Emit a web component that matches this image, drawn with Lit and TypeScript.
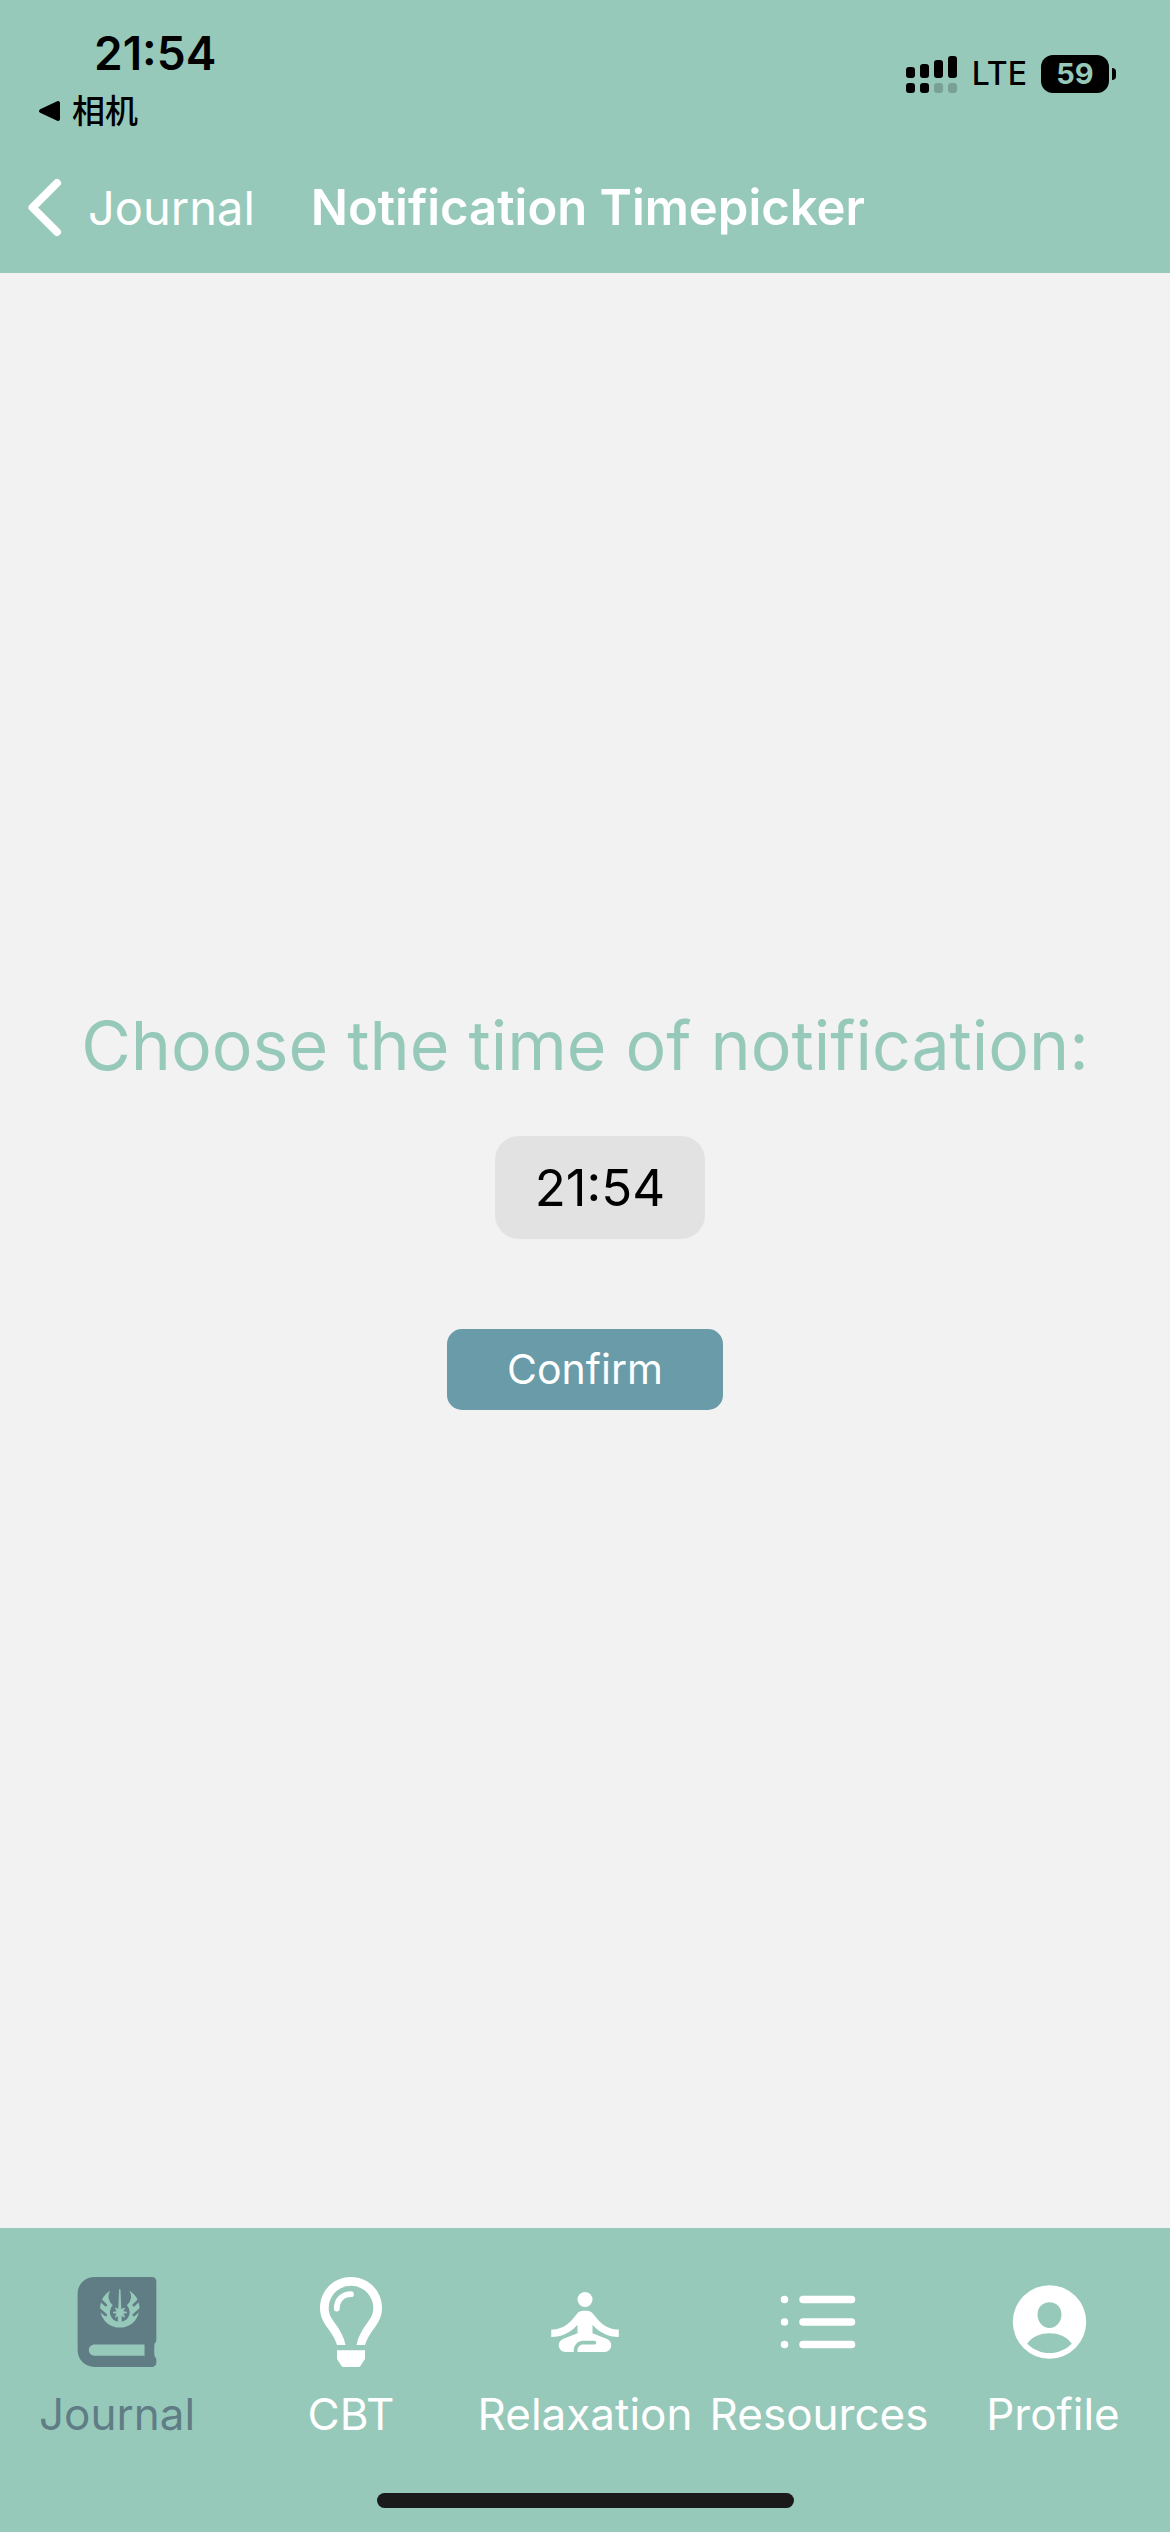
import { LitElement, html, svg, css } from "lit";
import { customElement, property, state } from "lit/decorators.js";

const icons = {
  journal: svg`<path fill-rule="evenodd" transform="translate(5.6) scale(.17578)" d="M438.4 377.6c-3.2 12.8-3.2 57.6 0 73.6Q448 460.8 448 470.4v16c0 16-12.8 25.6-25.6 25.6H96c-54.4 0-96-41.6-96-96V96C0 41.6 41.6 0 96 0H422.4C438.4 0 448 9.6 448 25.6v332.8Q448 372.8 438.4 377.6ZM380.8 384H96c-16 0-32 12.8-32 32s12.8 32 32 32H380.8ZM128.01562,176.01562c0,.51563.14063.98438.14063,1.5l37.10937,32.46876A7.99954,7.99954,0,0,1,160,224h-.01562a9.17678,9.17678,0,0,1-5.25-1.98438L131.14062,201.375C142.6875,250.95312,186.90625,288,240,288s97.3125-37.04688,108.875-86.625l-23.59375,20.64062a8.02516,8.02516,0,0,1-5.26563,1.96876H320a9.14641,9.14641,0,0,1-6.01562-2.71876A9.26508,9.26508,0,0,1,312,216a9.097,9.097,0,0,1,2.73438-6.01562l37.10937-32.46876c.01563-.53124.15625-1,.15625-1.51562,0-11.04688-2.09375-21.51562-5.06251-31.59375l-21.26562,21.25a8.00467,8.00467,0,0,1-11.32812-11.3125l26.42187-26.40625a111.81517,111.81517,0,0,0-46.35937-49.26562,63.02336,63.02336,0,0,1-14.0625,82.64062A55.83846,55.83846,0,0,1,251.625,254.73438l-1.42188-34.28126,12.67188,8.625a3.967,3.967,0,0,0,2.25.6875,3.98059,3.98059,0,0,0,3.43749-6.03124l-8.53124-14.3125,17.90625-3.71876a4.00647,4.00647,0,0,0,0-7.84374l-17.90625-3.71876,8.53124-14.3125a3.98059,3.98059,0,0,0-3.43749-6.03124,4.726,4.726,0,0,0-2.25.67187L248.6875,184.125,244,71.82812a4.00386,4.00386,0,0,0-8,0l-4.625,110.8125-12-8.15624a4.003,4.003,0,0,0-5.68751,5.35937l8.53126,14.3125L204.3125,197.875a3.99686,3.99686,0,0,0,0,7.82812l17.90625,3.73438-8.53126,14.29688a4.72469,4.72469,0,0,0-.56249,2.04687,4.59547,4.59547,0,0,0,1.25,2.90625,4.01059,4.01059,0,0,0,2.75,1.09375,4.09016,4.09016,0,0,0,2.25-.6875l10.35937-7.04687L228.375,254.76562a55.86414,55.86414,0,0,1-28.71875-93.45312,63.01119,63.01119,0,0,1-14.04688-82.65625,111.93158,111.93158,0,0,0-46.375,49.26563l26.42187,26.42187a7.99917,7.99917,0,0,1-11.3125,11.3125l-21.26563-21.26563C130.09375,154.48438,128,164.95312,128.01562,176.01562Z"/>`,
  bulb: svg`
    <path fill-rule="evenodd" d="M45 0C27.500 0 14 13.800 14 31c0 9 4 15 8 20.500C26.500 57.500 29 62 31 68h8.500C38 60 34.500 54 29.500 47 25.500 41.500 22.700 37.500 22.700 31 22.700 18.600 32.600 8.800 45 8.800S67.300 18.600 67.300 31c0 6.500-2.800 10.500-6.800 16C55.500 54 52 60 50.500 68H59c2-6 4.500-10.500 9-16.500 4-5.500 8-11.500 8-20.500C76 13.800 62.500 0 45 0Z"/>
    <path d="M31 73.300h28V82l-4.600 7q-.7 1-2 1H37.600q-1.300 0-2-1L31 82Z"/>
    <path d="M30.800 31.500C30.800 23 36.500 17.200 45 17.200" fill="none" stroke="currentColor" stroke-width="5.800" stroke-linecap="round"/>`,
  relaxation: svg`<g transform="scale(3.75)"><circle cx="12" cy="6" r="2"/><path d="M21 16v-2c-2.24 0-4.16-.96-5.6-2.68l-1.34-1.6C13.68 9.260 13.120 9 12.530 9h-1.050c-.6 0-1.150.26-1.530.72l-1.340 1.600C7.160 13.040 5.240 14 3 14v2c2.770 0 5.190-1.170 7-3.250V15l-3.880 1.550C5.450 16.820 5 17.480 5 18.210C5 19.200 5.800 20 6.790 20H9v-.5c0-1.380 1.120-2.500 2.500-2.500h3c.28 0 .5.22.5.5s-.22.5-.5.5h-3c-.83 0-1.500.67-1.500 1.500v.5h7.210C18.200 20 19 19.200 19 18.210c0-.73-.45-1.390-1.120-1.660L14 15v-2.250C15.810 14.830 18.230 16 21 16z"/></g>`,
  list: svg`<path d="M29 22.500h48.500M29 45h48.500M29 67.500h48.500M10.500 22.500h.01M10.500 45h.01M10.500 67.500h.01" fill="none" stroke="currentColor" stroke-width="7.500" stroke-linecap="round"/>`,
  profile: svg`<path fill-rule="evenodd" d="M41.500 8.300a36.700 36.700 0 1 0 0 73.400a36.700 36.700 0 1 0 0-73.400ZM41.500 25.200c7 0 12 5 12 12.300S48 51 41.500 51 29.500 44.800 29.500 37.500 34.500 25.200 41.500 25.200ZM41.500 76c-8.500 0-16.500-3.500-22.300-9.300C24 59.500 32.500 56.300 41.500 56.300s17.500 3.200 22.300 10.400C58 72.500 50 76 41.500 76Z"/>`,
};

type IconName = keyof typeof icons;

interface Tab {
  label: string;
  icon: IconName;
}

const TABS: Tab[] = [
  { label: "Journal", icon: "journal" },
  { label: "CBT", icon: "bulb" },
  { label: "Relaxation", icon: "relaxation" },
  { label: "Resources", icon: "list" },
  { label: "Profile", icon: "profile" },
];

@customElement("status-bar")
class StatusBar extends LitElement {
  static styles = css`
    :host {
      display: flex;
      justify-content: space-between;
      align-items: flex-start;
      height: 142px;
      padding: 24px 54px 0 38px;
      box-sizing: border-box;
      color: #000;
    }
    .clock {
      padding-left: 56px;
      font-size: 46px;
      line-height: 58px;
      font-weight: 600;
    }
    .return {
      display: flex;
      align-items: center;
      gap: 12px;
      color: inherit;
      text-decoration: none;
      font-family: Inter, "Noto Sans CJK SC", sans-serif;
      font-size: 33px;
      line-height: 58px;
      font-weight: 500;
    }
    .return svg {
      width: 22px;
      height: 22px;
    }
    .status {
      display: flex;
      align-items: center;
      gap: 14px;
      height: 40px;
      margin-top: 30px;
    }
    .signal {
      width: 52px;
      height: 38px;
    }
    .network {
      font-size: 32px;
      line-height: 40px;
      font-weight: 500;
    }
    .battery {
      display: flex;
      align-items: center;
      gap: 3px;
    }
    .level {
      width: 68px;
      border-radius: 12px;
      background: #000;
      color: #97c9ba;
      font-size: 29px;
      line-height: 38px;
      font-weight: 700;
      text-align: center;
    }
    .nub {
      width: 4px;
      height: 12px;
      border-radius: 0 6px 6px 0;
      background: #000;
    }
  `;

  render() {
    return html`
      <div>
        <div class="clock">21:54</div>
        <a class="return" href="#camera">
          <svg viewBox="0 0 22 22" aria-hidden="true">
            <path d="M3 11 20 3v16Z" stroke="#000" stroke-width="4" stroke-linejoin="round" />
          </svg>
          <span>相机</span>
        </a>
      </div>
      <div class="status">
        <svg class="signal" viewBox="0 0 52 38" aria-hidden="true">
          <rect x="0" y="12" width="9" height="11" rx="3" />
          <rect x="14" y="9" width="9" height="14" rx="3" />
          <rect x="28" y="5" width="9" height="18" rx="3" />
          <rect x="42" y="1" width="9" height="22" rx="3" />
          <rect x="0" y="28" width="9" height="10" rx="3" />
          <rect x="14" y="28" width="9" height="10" rx="3" />
          <rect x="28" y="28" width="9" height="10" rx="3" opacity=".2" />
          <rect x="42" y="28" width="9" height="10" rx="3" opacity=".2" />
        </svg>
        <span class="network">LTE</span>
        <span class="battery"><span class="level">59</span><span class="nub"></span></span>
      </div>
    `;
  }
}

@customElement("nav-header")
class NavHeader extends LitElement {
  @property() back = "";
  @property() heading = "";

  static styles = css`
    :host {
      display: flex;
      align-items: center;
      gap: 56px;
      height: 131px;
      padding: 0 28px;
      box-sizing: border-box;
      color: #fff;
    }
    .back {
      display: flex;
      align-items: center;
      gap: 26px;
      color: inherit;
      text-decoration: none;
      font-size: 47px;
      line-height: 60px;
    }
    .back svg {
      width: 34px;
      height: 58px;
    }
    .title {
      margin: 0;
      font-size: 49px;
      line-height: 60px;
      font-weight: 600;
      white-space: nowrap;
    }
  `;

  render() {
    return html`
      <a class="back" href="#journal">
        <svg viewBox="0 0 34 58" aria-hidden="true">
          <path d="M29 4 4.500 28.500 29 53" fill="none" stroke="currentColor" stroke-width="8" stroke-linecap="round" stroke-linejoin="round" />
        </svg>
        <span>${this.back}</span>
      </a>
      <h1 class="title">${this.heading}</h1>
    `;
  }
}

@customElement("time-form")
class TimeForm extends LitElement {
  @state() private time = "21:54";

  static styles = css`
    :host {
      display: flex;
      flex: 1;
      flex-direction: column;
      align-items: center;
      justify-content: center;
      padding-bottom: 90px;
      background: #f2f2f2;
    }
    .prompt {
      margin: 0 0 47px;
      color: #97c9ba;
      font-size: 68px;
      line-height: 88px;
      font-weight: 400;
      white-space: nowrap;
    }
    button {
      border: 0;
      font-family: inherit;
    }
    .time {
      margin: 0 0 90px 30px;
      padding: 0 40px;
      border-radius: 24px;
      background: #e2e2e2;
      color: #000;
      font-size: 51px;
      line-height: 103px;
    }
    .confirm {
      padding: 0 60px;
      border-radius: 15px;
      background: #699ba8;
      color: #fff;
      font-size: 41px;
      line-height: 81px;
    }
  `;

  render() {
    return html`
      <h2 class="prompt" id="prompt">Choose the time of notification:</h2>
      <button class="time" type="button" aria-describedby="prompt">${this.time}</button>
      <button class="confirm" type="button">Confirm</button>
    `;
  }
}

@customElement("tab-bar")
class TabBar extends LitElement {
  @property() selected = "Journal";

  static styles = css`
    :host {
      display: block;
      padding: 49px 0 24px;
    }
    .tabs {
      display: grid;
      grid-template-columns: repeat(5, minmax(0, 1fr));
    }
    .tab {
      display: flex;
      flex-direction: column;
      align-items: center;
      gap: 19px;
      color: #fff;
      text-decoration: none;
      font-size: 44px;
      line-height: 56px;
      white-space: nowrap;
    }
    .tab[aria-current="page"] {
      color: #607d86;
    }
    .tab svg {
      width: 90px;
      height: 90px;
      fill: currentColor;
    }
    .home {
      width: 417px;
      height: 15px;
      margin: 51px auto 0;
      border-radius: 8px;
      background: #1a1a1a;
    }
  `;

  render() {
    return html`
      <nav class="tabs">
        ${TABS.map(
          (tab) => html`
            <a
              class="tab"
              href="#${tab.label.toLowerCase()}"
              aria-current=${tab.label === this.selected ? "page" : "false"}
            >
              <svg viewBox="0 0 90 90" aria-hidden="true">${icons[tab.icon]}</svg>
              <span>${tab.label}</span>
            </a>
          `,
        )}
      </nav>
      <div class="home"></div>
    `;
  }
}

@customElement("app-root")
class AppRoot extends LitElement {
  static styles = css`
    :host {
      display: flex;
      flex-direction: column;
      min-height: 100vh;
      background: #97c9ba;
      font-family: Inter, "Noto Sans CJK SC", sans-serif;
    }
  `;

  render() {
    return html`
      <status-bar></status-bar>
      <nav-header back="Journal" heading="Notification Timepicker"></nav-header>
      <time-form></time-form>
      <tab-bar selected="Journal"></tab-bar>
    `;
  }
}
